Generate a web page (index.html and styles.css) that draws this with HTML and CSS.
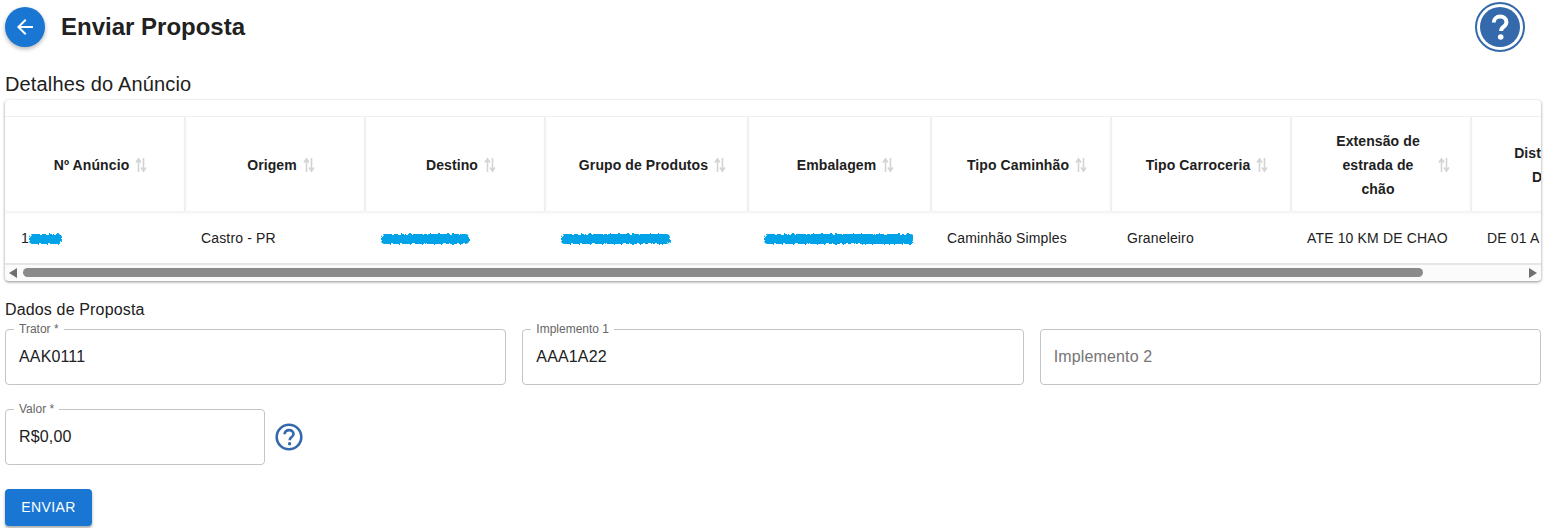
FILE: index.html
```html
<!DOCTYPE html>
<html lang="pt-BR">

<head>
    <meta charset="UTF-8">
    <title>Enviar Proposta</title>
    <link rel="stylesheet" href="styles.css">
</head>

<body>
    <svg class="defs" width="0" height="0">
        <symbol id="sort" viewBox="0 0 12 16">
            <path d="M3.5 15V3M1 5.5 3.5 2 6 5.5M8.5 1v12M6 10.5 8.5 14l2.5-3.5" fill="none" stroke="#d4d4d4" stroke-width="1.6" />
        </symbol>
        <filter id="rough" x="-5%" y="-40%" width="110%" height="180%">
            <feTurbulence type="fractalNoise" baseFrequency="0.35" numOctaves="2" seed="4" />
            <feDisplacementMap in="SourceGraphic" scale="4" />
        </filter>
    </svg>

    <header class="top">
        <div class="top-left">
            <button class="back" type="button">
                <svg width="24" height="24" viewBox="0 0 24 24"><path fill="#fff" d="M20 11H7.83l5.59-5.59L12 4l-8 8 8 8 1.41-1.41L7.83 13H20v-2z" /></svg>
            </button>
            <h1>Enviar Proposta</h1>
        </div>
        <div class="help-big">
            <svg width="50" height="50" viewBox="0 0 50 50">
                <circle cx="25" cy="25" r="24" fill="none" stroke="#3469ab" stroke-width="2" />
                <circle cx="25" cy="25" r="20" fill="#3469ab" />
                <path d="M18.8 20.5c0-3.6 2.8-6.1 6.4-6.1 3.5 0 6.2 2.3 6.2 5.5 0 2.4-1.2 3.6-2.9 4.9-1.6 1.2-2.4 2.1-2.4 4.3" fill="none" stroke="#fff" stroke-width="4" />
                <circle cx="25.7" cy="35" r="2.8" fill="#fff" />
            </svg>
        </div>
    </header>

    <h2 class="section-title">Detalhes do Anúncio</h2>

    <div class="card">
        <div class="table-wrap">
            <table>
                <colgroup>
                    <col class="c180"><col class="c180"><col class="c180"><col class="c203"><col class="c183"><col class="c180"><col class="c180"><col class="c180"><col class="c180">
                </colgroup>
                <thead>
                    <tr>
                        <th><div class="th"><span>Nº Anúncio</span><svg class="sort"><use href="#sort" /></svg></div></th>
                        <th><div class="th"><span>Origem</span><svg class="sort"><use href="#sort" /></svg></div></th>
                        <th><div class="th"><span>Destino</span><svg class="sort"><use href="#sort" /></svg></div></th>
                        <th><div class="th"><span>Grupo de Produtos</span><svg class="sort"><use href="#sort" /></svg></div></th>
                        <th><div class="th"><span>Embalagem</span><svg class="sort"><use href="#sort" /></svg></div></th>
                        <th><div class="th"><span>Tipo Caminhão</span><svg class="sort"><use href="#sort" /></svg></div></th>
                        <th><div class="th"><span>Tipo Carroceria</span><svg class="sort"><use href="#sort" /></svg></div></th>
                        <th><div class="th wide"><span>Extensão de<br>estrada de<br>chão</span><svg class="sort"><use href="#sort" /></svg></div></th>
                        <th><div class="th wide"><span>Distância até<br>Destino</span><svg class="sort"><use href="#sort" /></svg></div></th>
                    </tr>
                </thead>
                <tbody>
                    <tr>
                        <td>1<span class="blur w33"></span></td>
                        <td>Castro - PR</td>
                        <td><span class="blur w88"></span></td>
                        <td><span class="blur w109"></span></td>
                        <td><span class="blur w150"></span></td>
                        <td>Caminhão Simples</td>
                        <td>Graneleiro</td>
                        <td>ATE 10 KM DE CHAO</td>
                        <td>DE 01 A 10 KM</td>
                    </tr>
                </tbody>
            </table>
        </div>
        <div class="scrollbar">
            <span class="arrow left"></span>
            <div class="track"><div class="thumb"></div></div>
            <span class="arrow right"></span>
        </div>
    </div>

    <h3 class="sub-title">Dados de Proposta</h3>

    <div class="row-three">
        <div class="field">
            <label>Trator *</label>
            <span class="value">AAK0111</span>
        </div>
        <div class="field">
            <label>Implemento 1</label>
            <span class="value">AAA1A22</span>
        </div>
        <div class="field">
            <span class="value placeholder">Implemento 2</span>
        </div>
    </div>

    <div class="row-valor">
        <div class="field valor">
            <label>Valor *</label>
            <span class="value">R$0,00</span>
        </div>
        <svg width="28" height="28" viewBox="0 0 28 28">
            <circle cx="14" cy="14" r="12.3" fill="none" stroke="#3469ab" stroke-width="2.6" />
            <path d="M9.6 11.2c0-2.5 2-4.1 4.5-4.1s4.4 1.6 4.4 3.8c0 1.7-.9 2.5-2.1 3.4-1.2.9-1.7 1.5-1.7 3" fill="none" stroke="#3469ab" stroke-width="2.6" />
            <circle cx="14.6" cy="20.8" r="1.7" fill="#3469ab" />
        </svg>
    </div>

    <button class="send" type="button">ENVIAR</button>
</body>

</html>
```

FILE: styles.css
```css
* {
    margin: 0;
    padding: 0;
    box-sizing: border-box;
}

html,
body {
    height: 528px;
    overflow: hidden;
}

body {
    background: #fff;
    color: #212121;
    font-family: "Liberation Sans", Arial, sans-serif;
    padding: 2px 3px 0 5px;
}

.defs {
    display: block;
    height: 0;
}

.top {
    display: flex;
    justify-content: space-between;
    align-items: center;
    height: 50px;
    padding-right: 16px;
}

.top-left {
    display: flex;
    align-items: center;
    gap: 16px;
}

.back {
    width: 40px;
    height: 40px;
    border: 0;
    border-radius: 50%;
    background: #1976d2;
    display: flex;
    align-items: center;
    justify-content: center;
    box-shadow: 0 2px 4px rgba(0, 0, 0, 0.3);
}

h1 {
    font-size: 24px;
    font-weight: 700;
    line-height: 28px;
}

.help-big {
    width: 50px;
    height: 50px;
}

.section-title {
    font-size: 20px;
    font-weight: 400;
    line-height: 24px;
    letter-spacing: 0.15px;
    margin-top: 20px;
}

.card {
    margin-top: 4px;
    height: 181px;
    border-radius: 4px;
    background: #fff;
    padding-top: 16px;
    box-shadow: 0 1px 3px rgba(0, 0, 0, 0.45);
    overflow: hidden;
}

.table-wrap {
    overflow: hidden;
    height: 149px;
    border-bottom: 2px solid #e6e6e6;
}

table {
    table-layout: fixed;
    width: 1646px;
    border-collapse: collapse;
}

.c180 {
    width: 180px;
}

.c203 {
    width: 203px;
}

.c183 {
    width: 183px;
}

th {
    height: 94px;
    font-size: 14px;
    line-height: 24px;
    font-weight: 700;
    letter-spacing: 0.1px;
    border-top: 1px solid #efefef;
    border-right: 2px solid #f0f0f0;
    box-shadow: 0 2px 3px rgba(0, 0, 0, 0.06);
    padding: 3px 20px 0 32px;
}

.th {
    display: flex;
    align-items: center;
    justify-content: center;
    gap: 6px;
}

.th.wide span {
    flex: 1;
}

.sort {
    width: 12px;
    height: 16px;
    flex: none;
}

td {
    height: 52px;
    font-size: 14px;
    letter-spacing: 0.15px;
    padding: 3px 16px 0;
    white-space: nowrap;
    overflow: hidden;
}

.blur {
    display: inline-block;
    height: 10px;
    background: #00a2e8;
    border-radius: 4px;
    vertical-align: -1px;
    filter: url(#rough);
}

.w33 {
    width: 33px;
}

.w88 {
    width: 88px;
}

.w109 {
    width: 109px;
}

.w150 {
    width: 150px;
}

.scrollbar {
    display: flex;
    align-items: center;
    height: 15px;
    background: #fbfbfb;
    gap: 6px;
    padding: 0 4px;
}

.arrow {
    width: 0;
    height: 0;
    border-top: 5px solid transparent;
    border-bottom: 5px solid transparent;
}

.arrow.left {
    border-right: 8px solid #707070;
}

.arrow.right {
    border-left: 8px solid #707070;
}

.track {
    flex: 1;
}

.thumb {
    width: 1400px;
    height: 9px;
    border-radius: 5px;
    background: #8b8b8b;
}

.sub-title {
    font-size: 16px;
    font-weight: 400;
    line-height: 20px;
    letter-spacing: 0.15px;
    margin-top: 19px;
}

.row-three {
    display: grid;
    grid-template-columns: repeat(3, 1fr);
    gap: 16px;
    margin-top: 9px;
}

.field {
    position: relative;
    height: 56px;
    border: 1px solid #c4c4c4;
    border-radius: 4px;
    display: flex;
    align-items: center;
    padding: 0 13px;
}

.field label {
    position: absolute;
    top: -8px;
    left: 8px;
    padding: 0 5px;
    background: #fff;
    color: #666;
    font-size: 12px;
    line-height: 14px;
}

.value {
    font-size: 16px;
    letter-spacing: 0.15px;
}

.placeholder {
    color: #757575;
}

.row-valor {
    display: flex;
    align-items: center;
    gap: 10px;
    margin-top: 24px;
}

.valor {
    width: 260px;
}

.send {
    display: block;
    width: 87px;
    height: 37px;
    margin-top: 24px;
    padding-bottom: 2px;
    border: 0;
    border-radius: 4px;
    background: #1976d2;
    color: #fff;
    font-family: inherit;
    font-size: 14px;
    letter-spacing: 0.4px;
    box-shadow: 0 2px 3px rgba(0, 0, 0, 0.35);
}
```
